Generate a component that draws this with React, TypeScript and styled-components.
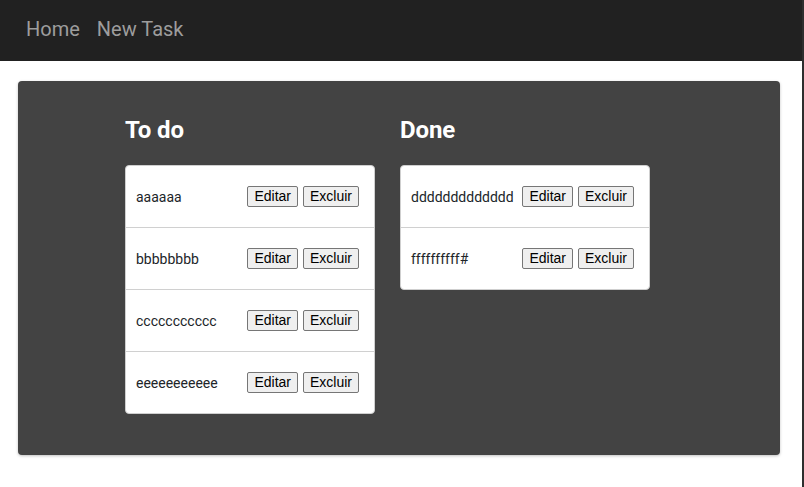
import React from "react";
import styled, { createGlobalStyle } from "styled-components";

const GlobalStyle = createGlobalStyle`
  html, body { margin: 0; padding: 0; background: #ffffff; }
  body {
    font-family: Roboto, "Liberation Sans", sans-serif;
    border-right: 2px solid #2e2e2e;
    min-height: 487px;
    box-sizing: border-box;
  }
`;

const Header = styled.header`
  height: 61px;
  background: #212121;
  display: flex;
  align-items: center;
  gap: 17px;
  padding: 0 0 4px 26px;
  box-sizing: border-box;
`;

const NavLink = styled.a`
  font-family: Roboto, sans-serif;
  font-size: 20px;
  line-height: 24px;
  color: #9d9d9d;
  text-decoration: none;
  cursor: pointer;
`;

const Main = styled.main`
  padding: 20px 22px 0 18px;
`;

const Panel = styled.section`
  background: #434343;
  border-radius: 4px;
  box-shadow: 0 1px 3px rgba(0, 0, 0, 0.25);
  padding: 35px 0 41px 107px;
  display: flex;
  align-items: flex-start;
  gap: 25px;
`;

const Column = styled.div`
  width: 250px;
`;

const Title = styled.h2`
  margin: 0 0 21px;
  font-family: Roboto, sans-serif;
  font-weight: 700;
  font-size: 24px;
  line-height: 28px;
  color: #ffffff;
  letter-spacing: -0.1px;
`;

const Card = styled.ul`
  margin: 0;
  padding: 0;
  list-style: none;
  background: #ffffff;
  border: 1px solid #cfcfcf;
  border-radius: 4px;
  overflow: hidden;
`;

const Row = styled.li`
  height: 61px;
  display: flex;
  align-items: center;
  justify-content: space-between;
  padding: 0 15px 0 10px;
  border-bottom: 1px solid #d0d0d0;
  &:last-child { border-bottom: none; }
`;

const Label = styled.span`
  font-family: Roboto, sans-serif;
  font-size: 14px;
  color: #212529;
`;

const Actions = styled.div`
  display: flex;
  gap: 5px;
`;

const Button = styled.button`
  font-family: "Liberation Sans", Arial, sans-serif;
  font-size: 14px;
  line-height: 17px;
  padding: 1px 6px;
  background: #efefef;
  color: #000000;
  border: 1px solid #767676;
  border-radius: 2px;
  cursor: pointer;
`;

const todo = ["aaaaaa", "bbbbbbbb", "ccccccccccc", "eeeeeeeeeee"];
const done = ["ddddddddddddd", "ffffffffff#"];

function TaskList({ title, items }: { title: string; items: string[] }) {
  return (
    <Column>
      <Title>{title}</Title>
      <Card>
        {items.map((t) => (
          <Row key={t}>
            <Label>{t}</Label>
            <Actions>
              <Button>Editar</Button>
              <Button>Excluir</Button>
            </Actions>
          </Row>
        ))}
      </Card>
    </Column>
  );
}

export default function App() {
  return (
    <>
      <GlobalStyle />
      <Header>
        <NavLink>Home</NavLink>
        <NavLink>New Task</NavLink>
      </Header>
      <Main>
        <Panel>
          <TaskList title="To do" items={todo} />
          <TaskList title="Done" items={done} />
        </Panel>
      </Main>
    </>
  );
}
